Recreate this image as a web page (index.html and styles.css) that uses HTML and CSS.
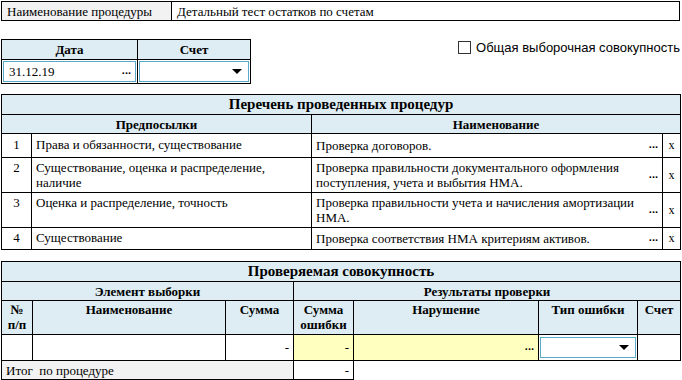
FILE: index.html
```html
<!DOCTYPE html>
<html lang="ru">
<head>
    <meta charset="UTF-8">
    <title>Процедура</title>
    <link rel="stylesheet" href="styles.css">
</head>
<body>
    <div class="page">
        <!-- Procedure name -->
        <table class="grid proc-name">
            <colgroup><col style="width: 170px"><col></colgroup>
            <tr>
                <td class="label">Наименование процедуры</td>
                <td>Детальный тест остатков по счетам</td>
            </tr>
        </table>

        <!-- Date / account -->
        <div class="filters">
            <table class="grid date-acc">
                <colgroup><col style="width: 136px"><col style="width: 113px"></colgroup>
                <tr class="head-row"><th>Дата</th><th>Счет</th></tr>
                <tr>
                    <td><div class="field"><span>31.12.19</span><span class="dots">...</span></div></td>
                    <td><div class="field"><span></span><span class="arrow"></span></div></td>
                </tr>
            </table>
            <label class="common"><span class="check"></span>Общая выборочная совокупность</label>
        </div>

        <!-- Procedures list -->
        <table class="grid procs">
            <colgroup>
                <col style="width: 30px">
                <col style="width: 280px">
                <col style="width: 351px">
                <col style="width: 18px">
            </colgroup>
            <tr class="title-row"><th colspan="4">Перечень проведенных процедур</th></tr>
            <tr class="head-row"><th colspan="2">Предпосылки</th><th colspan="2">Наименование</th></tr>
            <tr class="r1">
                <td class="num">1</td>
                <td>Права и обязанности, существование</td>
                <td class="name"><div class="name-box"><span>Проверка договоров.</span><span class="dots">...</span></div></td>
                <td class="del">x</td>
            </tr>
            <tr class="r2">
                <td class="num">2</td>
                <td>Существование, оценка и распределение, наличие</td>
                <td class="name"><div class="name-box"><span>Проверка правильности документального оформления поступления, учета и выбытия НМА.</span><span class="dots">...</span></div></td>
                <td class="del">x</td>
            </tr>
            <tr class="r2">
                <td class="num">3</td>
                <td>Оценка и распределение, точность</td>
                <td class="name"><div class="name-box"><span>Проверка правильности учета и начисления амортизации НМА.</span><span class="dots">...</span></div></td>
                <td class="del">x</td>
            </tr>
            <tr class="r4">
                <td class="num">4</td>
                <td>Существование</td>
                <td class="name"><div class="name-box"><span>Проверка соответствия НМА критериям активов.</span><span class="dots">...</span></div></td>
                <td class="del">x</td>
            </tr>
        </table>

        <!-- Checked population -->
        <table class="grid population">
            <colgroup>
                <col style="width: 31px">
                <col style="width: 193px">
                <col style="width: 68px">
                <col style="width: 60px">
                <col style="width: 185px">
                <col style="width: 99px">
                <col style="width: 43px">
            </colgroup>
            <tr class="title-row"><th colspan="7">Проверяемая совокупность</th></tr>
            <tr class="head-row"><th colspan="3">Элемент выборки</th><th colspan="4">Результаты проверки</th></tr>
            <tr class="col-row">
                <th>№<br>п/п</th>
                <th>Наименование</th>
                <th>Сумма</th>
                <th>Сумма<br>ошибки</th>
                <th>Нарушение</th>
                <th>Тип ошибки</th>
                <th>Счет</th>
            </tr>
            <tr class="data-row">
                <td></td>
                <td></td>
                <td class="amount">-</td>
                <td class="amount edit">-</td>
                <td class="edit"><div class="name-box"><span></span><span class="dots">...</span></div></td>
                <td class="pick"><div class="field"><span></span><span class="arrow"></span></div></td>
                <td></td>
            </tr>
            <tr class="total-row">
                <td colspan="3" class="label">Итог&nbsp; по процедуре</td>
                <td class="amount">-</td>
                <td colspan="3" class="blank"></td>
            </tr>
        </table>
    </div>
</body>
</html>
```

FILE: styles.css
```css
* {
    margin: 0;
    padding: 0;
    box-sizing: border-box;
}

body {
    font-family: 'Liberation Serif', 'Times New Roman', serif;
    font-size: 13px;
    color: #000000;
    background: #ffffff;
}

.page {
    padding: 1px;
    width: 681px;
}

/* Generic grid */
.grid {
    border-collapse: collapse;
    table-layout: fixed;
}

.grid td,
.grid th {
    border: 1px solid #000000;
    padding: 0 4px;
    line-height: 15px;
    text-align: left;
    vertical-align: top;
}

.grid th {
    background: #deedf3;
    font-weight: bold;
    text-align: center;
}

.label {
    background: #f2f2f2;
}

/* Procedure name */
.proc-name {
    width: 679px;
}

.proc-name td {
    height: 19px;
    vertical-align: middle;
    padding: 0 5px;
}

/* Date and account */
.filters {
    display: flex;
    justify-content: space-between;
    align-items: flex-start;
    margin-top: 18px;
}

.date-acc {
    width: 250px;
}

.date-acc .head-row th {
    height: 20px;
    vertical-align: middle;
}

.date-acc td {
    height: 24px;
    padding: 1px;
    vertical-align: middle;
}

.field {
    display: flex;
    justify-content: space-between;
    align-items: center;
    height: 21px;
    border: 1px solid #5aa9c6;
    background: #ffffff;
    padding: 0 4px 0 5px;
}

.dots {
    font-family: 'Liberation Sans', Arial, sans-serif;
    font-weight: bold;
    font-size: 11px;
    line-height: 10px;
    padding-bottom: 3px;
}

.arrow {
    width: 0;
    height: 0;
    border-left: 5px solid transparent;
    border-right: 5px solid transparent;
    border-top: 5px solid #000000;
    margin-right: 2px;
}

.common {
    display: flex;
    align-items: center;
    gap: 5px;
    margin-top: 1px;
    font-family: 'Liberation Sans', Arial, sans-serif;
    font-size: 13px;
    line-height: 15px;
}

.check {
    width: 13px;
    height: 13px;
    border: 1px solid #333333;
    background: #ffffff;
}

/* Procedures list */
.procs {
    width: 679px;
    margin-top: 10px;
}

.title-row th {
    height: 20px;
    font-size: 15px;
    vertical-align: middle;
}

.head-row th {
    height: 19px;
    vertical-align: middle;
}

.procs td {
    padding: 2px 4px;
}

.procs .r1 td {
    padding-top: 3px;
}

.procs .num {
    text-align: center;
}

.procs td.name {
    vertical-align: middle;
    padding: 2px 4px;
}

.name-box {
    display: flex;
    justify-content: space-between;
    align-items: center;
    gap: 10px;
}

.procs td.del {
    vertical-align: middle;
    text-align: center;
    padding: 0;
    font-size: 12px;
}

.procs .r1 { height: 24px; }
.procs .r2 { height: 34px; }
.procs .r4 { height: 22px; }

/* Checked population */
.population {
    width: 679px;
    margin-top: 11px;
}

.col-row th {
    height: 34px;
    padding: 1px 2px;
}

.data-row td {
    height: 26px;
    vertical-align: middle;
}

.amount {
    text-align: right !important;
    vertical-align: middle !important;
}

.edit {
    background: #ffffbf;
}

.data-row td.pick {
    padding: 1px;
}

.total-row td {
    height: 19px;
    vertical-align: middle;
}

.grid td.blank {
    border: none;
    background: #ffffff;
}
```
